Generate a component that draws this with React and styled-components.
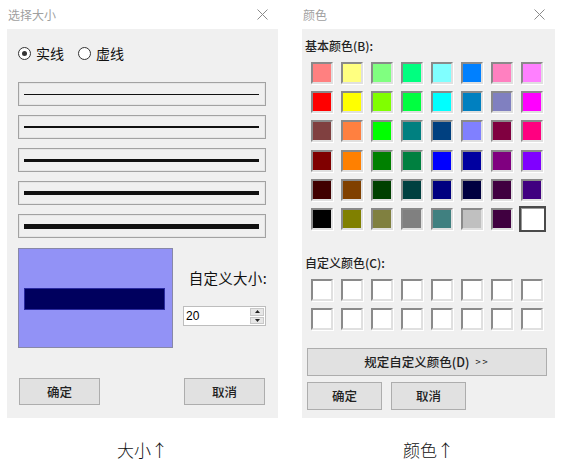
import React from "react";
import styled, { createGlobalStyle } from "styled-components";

const Global = createGlobalStyle`
  html, body { margin: 0; padding: 0; background: #fff; }
  body { font-family: "Noto Sans CJK SC", "Noto Sans", sans-serif; color: #000; }
`;

const Page = styled.div`
  display: flex;
  gap: 10px;
  width: 565px;
  height: 471px;
`;

const Column = styled.div`
  display: flex;
  flex-direction: column;
  width: ${(p) => p.$w}px;
`;

const TitleBar = styled.div`
  height: 29px;
  display: flex;
  align-items: center;
  justify-content: space-between;
  padding: 0 17px 0 8px;
  box-sizing: border-box;
  font-size: 12px;
  color: #a0a0a0;
`;

const CloseX = () => (
  <svg width="11" height="11" viewBox="0 0 11 11">
    <path d="M0.5 0.5 L10.5 10.5 M10.5 0.5 L0.5 10.5" stroke="#8a8a8a" strokeWidth="1" fill="none" />
  </svg>
);

const Panel = styled.div`
  margin: 0 7px;
  height: 389px;
  background: #f0f0f0;
  box-sizing: border-box;
  display: flex;
  flex-direction: column;
  padding: ${(p) => p.$pad};
`;

const Caption = styled.div`
  margin-top: 22px;
  text-align: center;
  font-size: 17px;
  font-weight: 300;
  line-height: 20px;
  color: #111;
`;

/* ----- left dialog ----- */
const RadioRow = styled.div`
  display: flex;
  align-items: center;
  height: 20px;
  margin-top: 14px;
  gap: 14px;
`;

const RadioItem = styled.label`
  display: flex;
  align-items: center;
  gap: 5px;
  font-size: 14px;
  color: #111;
`;

const RadioCircle = styled.span`
  width: 11px;
  height: 11px;
  border: 1px solid #333;
  border-radius: 50%;
  background: #fff;
  display: flex;
  align-items: center;
  justify-content: center;
  &::after {
    content: "";
    width: 5px;
    height: 5px;
    border-radius: 50%;
    background: ${(p) => (p.$on ? "#333" : "transparent")};
  }
`;

const LineList = styled.div`
  display: flex;
  flex-direction: column;
  gap: 9px;
  margin-top: 19px;
`;

const LineBox = styled.div`
  height: 24px;
  box-sizing: border-box;
  border: 1px solid #a2a2a2;
  box-shadow: inset 0 0 0 1px #e6e6e6;
  display: flex;
  align-items: center;
  padding: 0 6px 0 5px;
`;

const Line = styled.div`
  flex: 1;
  height: ${(p) => p.$t}px;
  background: #111;
`;

const LowerRow = styled.div`
  display: flex;
  margin-top: 10px;
`;

const Preview = styled.div`
  width: 155px;
  height: 100px;
  box-sizing: border-box;
  background: #9292f6;
  border: 1px solid #8888a8;
  display: flex;
  align-items: center;
  padding: 0 7px 0 5px;
`;

const PreviewBar = styled.div`
  flex: 1;
  height: 20px;
  background: #00005e;
  border: 1px solid #2a2aa0;
  margin-top: 1px;
`;

const SizeCol = styled.div`
  flex: 1;
  display: flex;
  flex-direction: column;
  align-items: flex-end;
  padding-top: 19px;
`;

const SizeLabel = styled.div`
  font-size: 14.5px;
  letter-spacing: 0.3px;
  line-height: 22px;
  color: #111;
  margin-right: -1px;
`;

const Spin = styled.div`
  margin-top: 17px;
  width: 83px;
  height: 20px;
  box-sizing: border-box;
  border: 1px solid #bdbdbd;
  background: #fff;
  display: flex;
  align-items: center;
  padding: 1px;
`;

const SpinValue = styled.span`
  flex: 1;
  font-family: "Liberation Sans", Arial, sans-serif;
  font-size: 12px;
  padding-left: 1px;
  color: #000;
`;

const SpinButtons = styled.div`
  width: 14px;
  height: 16px;
  display: flex;
  flex-direction: column;
  gap: 1px;
`;

const SpinBtn = styled.div`
  flex: 1;
  background: #e6e6e6;
  border: 1px solid #c8c8c8;
  box-sizing: border-box;
  display: flex;
  align-items: center;
  justify-content: center;
`;

const Tri = ({ up }) => (
  <svg width="5" height="3" viewBox="0 0 5 3">
    <path d={up ? "M0 3 L2.5 0 L5 3 Z" : "M0 0 L2.5 3 L5 0 Z"} fill="#222" />
  </svg>
);

const ButtonRow = styled.div`
  display: flex;
  justify-content: ${(p) => p.$justify || "flex-start"};
  gap: ${(p) => p.$gap || 0}px;
  margin-top: ${(p) => p.$mt}px;
  padding: ${(p) => p.$pad || 0};
`;

const Button = styled.div`
  width: ${(p) => p.$w}px;
  height: ${(p) => p.$h}px;
  box-sizing: border-box;
  background: #e1e1e1;
  border: 1px solid #adadad;
  display: flex;
  align-items: center;
  justify-content: center;
  font-size: 12.5px;
  font-weight: 500;
  color: #222;
`;

const Arrows = styled.span`
  font-size: 9px;
  letter-spacing: 2px;
  margin-left: 6px;
`;

/* ----- right dialog ----- */
const Label = styled.div`
  font-size: 12px;
  font-weight: 500;
  color: #222;
  line-height: 16px;
  margin-top: ${(p) => p.$mt}px;
  padding-left: 3px;
`;

const Grid = styled.div`
  display: grid;
  grid-template-columns: repeat(8, 22px);
  grid-auto-rows: 22px;
  column-gap: 8px;
  row-gap: ${(p) => p.$rg}px;
  margin-top: ${(p) => p.$mt}px;
  padding-left: 9px;
`;

const Swatch = styled.div`
  box-sizing: border-box;
  background: ${(p) => p.$c};
  border-style: solid;
  border-width: 2px;
  border-color: #8a8a8a #e0e0e0 #e0e0e0 #8a8a8a;
  box-shadow: 1px 1px 0 #ffffff;
  ${(p) =>
    p.$sel &&
    `
    border: 2px solid #4a4a4a;
    box-shadow: inset 1px 1px 0 #9a9a9a;
    margin: -2px -3px -2px -2px;
  `}
`;

const basic = [
  "#FF8080", "#FFFF80", "#80FF80", "#00FF80", "#80FFFF", "#0080FF", "#FF80C0", "#FF80FF",
  "#FF0000", "#FFFF00", "#80FF00", "#00FF40", "#00FFFF", "#0080C0", "#8080C0", "#FF00FF",
  "#804040", "#FF8040", "#00FF00", "#008080", "#004080", "#8080FF", "#800040", "#FF0080",
  "#800000", "#FF8000", "#008000", "#008040", "#0000FF", "#0000A0", "#800080", "#8000FF",
  "#400000", "#804000", "#004000", "#004040", "#000080", "#000040", "#400040", "#400080",
  "#000000", "#808000", "#808040", "#808080", "#408080", "#C0C0C0", "#400040", "#FFFFFF",
];

export default function App() {
  return (
    <>
      <Global />
      <Page>
        <Column $w={285}>
          <TitleBar>
            <span>选择大小</span>
            <CloseX />
          </TitleBar>
          <Panel $pad="0 12px 0 11px">
            <RadioRow>
              <RadioItem>
                <RadioCircle $on />
                实线
              </RadioItem>
              <RadioItem>
                <RadioCircle />
                虚线
              </RadioItem>
            </RadioRow>
            <LineList>
              {[1, 2, 3, 4, 5].map((t) => (
                <LineBox key={t}>
                  <Line $t={t} />
                </LineBox>
              ))}
            </LineList>
            <LowerRow>
              <Preview>
                <PreviewBar />
              </Preview>
              <SizeCol>
                <SizeLabel>自定义大小:</SizeLabel>
                <Spin>
                  <SpinValue>20</SpinValue>
                  <SpinButtons>
                    <SpinBtn><Tri up /></SpinBtn>
                    <SpinBtn><Tri /></SpinBtn>
                  </SpinButtons>
                </Spin>
              </SizeCol>
            </LowerRow>
            <ButtonRow $justify="space-between" $mt={30} $pad="0 1px 0 1px">
              <Button $w={81} $h={27}>确定</Button>
              <Button $w={81} $h={27}>取消</Button>
            </ButtonRow>
          </Panel>
          <Caption>大小↑</Caption>
        </Column>

        <Column $w={267}>
          <TitleBar>
            <span>颜色</span>
            <CloseX />
          </TitleBar>
          <Panel $pad="0">
            <Label $mt={9}>基本颜色(B):</Label>
            <Grid $rg={7.2} $mt={8}>
              {basic.map((c, i) => (
                <Swatch key={i} $c={c} $sel={i === basic.length - 1} />
              ))}
            </Grid>
            <Label $mt={25}>自定义颜色(C):</Label>
            <Grid $rg={7} $mt={8}>
              {Array.from({ length: 16 }).map((_, i) => (
                <Swatch key={i} $c="#ffffff" />
              ))}
            </Grid>
            <ButtonRow $mt={18} $pad="0 0 0 5px">
              <Button $w={240} $h={28}>
                规定自定义颜色(D)<Arrows>&gt;&gt;</Arrows>
              </Button>
            </ButtonRow>
            <ButtonRow $mt={6} $gap={9} $pad="0 0 0 5px">
              <Button $w={75} $h={28}>确定</Button>
              <Button $w={75} $h={28}>取消</Button>
            </ButtonRow>
          </Panel>
          <Caption>颜色↑</Caption>
        </Column>
      </Page>
    </>
  );
}
